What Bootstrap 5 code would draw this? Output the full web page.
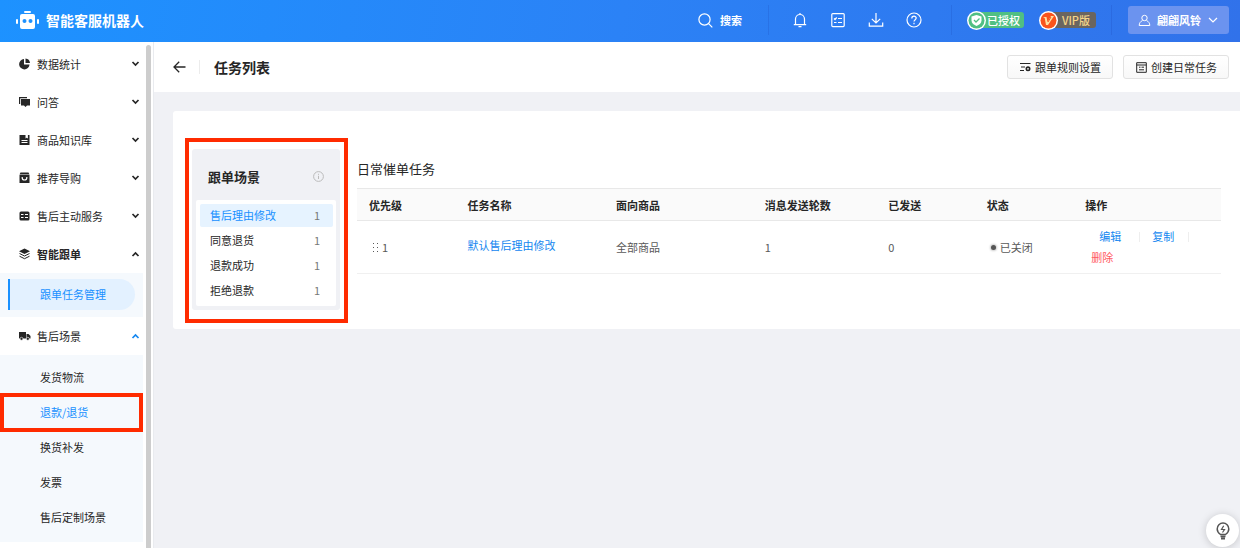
<!DOCTYPE html>
<html lang="zh-CN">
<head>
<meta charset="utf-8">
<meta name="viewport" content="width=device-width, initial-scale=1">
<title>智能客服机器人</title>
<link rel="stylesheet" href="https://cdn.jsdelivr.net/npm/bootstrap@5.3.0/dist/css/bootstrap.min.css">
<style>
  body { font-family: "Noto Sans CJK SC", "Noto Sans", sans-serif; font-size: 11px; line-height: 20px; color: #262626; background: #f0f1f5; }
  a { text-decoration: none; }
  svg { display: block; flex: none; fill: none; stroke: currentColor; }
  .solid { fill: currentColor; stroke: none; }

  /* top bar */
  .topbar { height: 42px; padding: 0 11px 2px 16px; color: #fff; background: linear-gradient(100deg, #1d92ff 0%, #2b82f6 50%, #3172ea 100%); }
  .topbar a, .topbar button { color: #fff; }
  .brand { font-size: 14px; font-weight: 700; gap: 7px; }
  .search { gap: 7px; padding-right: 26px; }
  .rule { width: 1px; height: 30px; background: rgba(20, 60, 170, .18); }
  .icon-set { gap: 22px; padding: 0 29px 0 23px; }
  .tags { gap: 15px; padding: 0 15px; }
  .tag { height: 16px; line-height: 16px; border-radius: 3px; padding: 0 4px 0 11px; margin-left: -10px; }
  .tag-ok { background: #50bf83; font-weight: 500; }
  .tag-vip { background: #6a6560; color: #f5d488; padding-left: 14px; padding-right: 6px; font-weight: 500; }
  .disc { z-index: 1; stroke: none; }
  .user-btn { height: 28px; padding: 0 11px 0 10px; gap: 6px; border: 0; border-radius: 3px; background: #6b93ef; font-size: 11px; font-weight: 700; }
  .user-btn svg:last-child { margin-left: 1px; }

  /* side menu */
  .side { width: 154px; background: #fff; border-right: 1px solid #e9ebef; padding-right: 2px; height: calc(100vh - 42px); overflow: hidden; }
  .menu { width: 143px; padding-top: 3px; }
  .group { height: 38px; width: 100%; border: 0; background: none; padding: 0 3px 0 18px; gap: 6px; font-size: 11px; color: #262626; text-align: left; }
  .sub { background: #f5f9fd; }
  .sub a { display: block; height: 35px; line-height: 35px; padding-left: 40px; color: #262626; }
  .sub a.on { color: #1890ff; }
  .sub-task { padding: 6px 8px 7px; }
  .sub-task a { height: 31px; line-height: 31px; padding-left: 30px; border-left: 2px solid #1890ff; border-radius: 0 16px 16px 0; background: #e3f1ff; }
  .sub-scene { padding: 5px 0 7px; }
  .marked { position: relative; }
  .marked::after { content: ""; position: absolute; inset: -2px 0; border: 4px solid #ff2b00; pointer-events: none; }
  .track { width: 5px; margin-top: 3px; border-radius: 3px 3px 0 0; background: #cdcdcd; }

  /* page head */
  .pagehead { height: 50px; background: #fff; padding: 0 11px 0 19px; }
  .pagehead h1 { font-size: 14px; line-height: 20px; font-weight: 700; }
  .pagehead .sep { width: 1px; height: 14px; background: #ececec; margin: 0 14px 0 13px; }
  .tools { gap: 10px; }
  .tool-btn { height: 24px; padding: 0 11px 0 12px; gap: 4px; border: 1px solid #e2e2e2; border-radius: 3px; background: linear-gradient(#fff, #f8f8f8); font-size: 11px; color: #262626; }

  /* content */
  .board { margin: 19px 0 0 19px; padding: 27px 19px 6px 12px; background: #fff; border-radius: 3px 0 0 3px; gap: 9px; }
  .scene-mark { width: 163px; flex: none; border: 4px solid #ff2b00; padding: 7px 4px 9px 3px; }
  .scene { background: #f0f1f5; border-radius: 3px; padding: 0 4px 4px; }
  .scene h2 { font-size: 13px; line-height: 20px; font-weight: 700; }
  .scene-head { height: 51px; padding: 4px 12px 0 12px; }
  .hint { color: #bbb; }
  .scene-list { background: #fff; border-radius: 2px; padding: 4px 3px 4px 4px; gap: 2px; }
  .scene-list a { height: 23px; line-height: 23px; padding: 0 13px 0 10px; color: #262626; border-radius: 2px; }
  .scene-list a span:last-child { color: #777; }
  .scene-list a.on { background: #e6f3ff; color: #1890ff; }
  .tasks h2 { font-size: 13px; line-height: 20px; font-weight: 400; margin: 21px 0 9px; }
  .task-table { table-layout: fixed; width: 100%; }
  .task-table th { height: 32px; padding: 0 12px; background: #fafafa; border-top: 1px solid #e8e8e8; border-bottom: 1px solid #e8e8e8; }
  .task-table td { height: 53px; padding: 0 12px; color: #595959; border-bottom: 1px solid #f0f0f0; }
  .link-blue { color: #1487f0; }
  .link-red { color: #ff5a5f; }
  .dot { width: 5px; height: 5px; border-radius: 50%; background: #555; box-shadow: 0 0 2px 1px #ccc; }
  .ops { line-height: 21px; padding-left: 6px; }
  .ops .sep { width: 1px; height: 10px; background: #eee; margin: 0 12px 0 18px; }
  .ops .sep:last-child { margin: 0 0 0 14px; }
  .tip-btn { position: fixed; right: 1px; bottom: 1px; width: 33px; height: 33px; border: 0; border-radius: 50%; background: #fff; color: #555; box-shadow: 0 1px 8px rgba(0, 0, 0, .18); }
</style>
</head>
<body>
<header class="topbar d-flex align-items-center">
  <a class="brand d-flex align-items-center" href="#">
    <svg class="solid" width="23" height="20" viewBox="0 0 23 20"><rect x="8" y="1" width="7" height="2" rx="1"/><path fill-rule="evenodd" d="M6 4h11a2 2 0 0 1 2 2v11a2 2 0 0 1-2 2H6a2 2 0 0 1-2-2V6a2 2 0 0 1 2-2zm2.500 5a2 2 0 1 0 0 4 2 2 0 0 0 0-4zm6 0a2 2 0 1 0 0 4 2 2 0 0 0 0-4z"/><rect x="0" y="9" width="2" height="5" rx="1"/><rect x="21" y="9" width="2" height="5" rx="1"/></svg>
    <span>智能客服机器人</span>
  </a>
  <div class="ms-auto d-flex align-items-center">
    <a class="search d-flex align-items-center fw-bold" href="#">
      <svg width="15" height="15" viewBox="0 0 15 15" stroke-width="1.200"><circle cx="6.500" cy="6.500" r="5.600"/><path d="M10.600 10.600 14.300 14.300"/></svg><span>搜索</span>
    </a>
    <span class="rule"></span>
    <div class="icon-set d-flex align-items-center">
      <a href="#" aria-label="通知"><svg width="16" height="16" viewBox="0 0 16 16" stroke-width="1.200"><path d="M3.500 12.500V7a4.500 4.500 0 0 1 9 0v5.500M1.800 12.600h12.400M8 2.500V1M6.500 14.600h3"/></svg></a>
      <a href="#" aria-label="清单"><svg width="16" height="16" viewBox="0 0 16 16" stroke-width="1.200"><rect x="1.800" y="1.600" width="12.400" height="13" rx="1"/><path d="m4 6.500 1 1 1.700-2M8 6.500h4M4 10.500h2.500M8 10.500h4"/></svg></a>
      <a href="#" aria-label="下载"><svg width="16" height="16" viewBox="0 0 16 16" stroke-width="1.200"><path d="M8 1v10M3.800 6.800 8 11l4.200-4.200M1.300 10.500v3.700h13.400v-3.700"/></svg></a>
      <a href="#" aria-label="帮助"><svg width="16" height="16" viewBox="0 0 16 16" stroke-width="1.200"><circle cx="8" cy="8" r="7"/><path d="M5.800 6.400c0-3 4.400-2.800 4.400-.3C10.200 7.700 8 7.700 8 9.600M8 10.800v1.400"/></svg></a>
    </div>
    <span class="rule"></span>
    <div class="tags d-flex">
      <span class="d-flex align-items-center">
        <svg class="disc" width="19" height="19" viewBox="0 0 19 19"><circle cx="9.500" cy="9.500" r="9.500" fill="#fff"/><circle cx="9.500" cy="9.500" r="8" fill="#50bf83"/><path d="m9.500 4 5 1.500v4c0 2.800-2.500 4.500-5 5.500-2.500-1-5-2.700-5-5.500v-4z" fill="#fff"/><path d="m7 9 2 2 3.500-3.500" stroke="#50bf83" stroke-width="1.300"/></svg>
        <span class="tag tag-ok">已授权</span>
      </span>
      <span class="d-flex align-items-center">
        <svg class="disc" width="19" height="19" viewBox="0 0 19 19"><circle cx="9.500" cy="9.500" r="9.500" fill="#fff"/><circle cx="9.500" cy="9.500" r="8" fill="#fa541c"/><path d="M4 6h3.500L8.500 11 12 5h3L9 14H7L5.700 7z" fill="#ffe0a0"/><path d="m9 11 3-5" stroke="#fa541c"/></svg>
        <span class="tag tag-vip">VIP版</span>
      </span>
    </div>
    <span class="rule me-3"></span>
    <button class="user-btn d-flex align-items-center" type="button">
      <svg width="13" height="13" viewBox="0 0 13 13"><circle cx="6.500" cy="4" r="2.700"/><path d="M4.500 6.500C2.500 7.500 1.200 9 1.200 11.500h10.600c0-2.500-1.300-4-3.300-5"/></svg>
      <span>翩翩风铃</span>
      <svg width="10" height="6" viewBox="0 0 10 6" stroke-width="1.200"><path d="m1 1 4 4 4-4"/></svg>
    </button>
  </div>
</header>

<div class="d-flex">
  <aside class="side d-flex flex-shrink-0 justify-content-between">
    <nav class="menu">
      <button class="group d-flex align-items-center" type="button"><svg class="solid" width="13" height="12" viewBox="0 0 13 12"><path d="M6 1v5.500h5.500A5.200 5.200 0 1 1 6 1z"/><path d="M7.500.5a5 5 0 0 1 4.500 4.500H7.500z"/></svg><span class="flex-grow-1">数据统计</span><svg width="9" height="6" viewBox="0 0 9 6" stroke-width="1.700"><path d="m1.500 1 3 3 3-3"/></svg></button>
      <button class="group d-flex align-items-center" type="button"><svg class="solid" width="13" height="12" viewBox="0 0 13 12"><path d="M1 1h8v1.200H2.200V8H1z"/><path d="M3 3h9v6.500H9L7.500 11 6 9.500H3z"/></svg><span class="flex-grow-1">问答</span><svg width="9" height="6" viewBox="0 0 9 6" stroke-width="1.700"><path d="m1.500 1 3 3 3-3"/></svg></button>
      <button class="group d-flex align-items-center" type="button"><svg class="solid" width="13" height="12" viewBox="0 0 13 12"><path fill-rule="evenodd" d="M1.500 1h6v3.500l1.200-.8 1.200.8V1h1.600v10h-10zM3.500 6v1h6V6zm0 2v1h6V8z"/></svg><span class="flex-grow-1">商品知识库</span><svg width="9" height="6" viewBox="0 0 9 6" stroke-width="1.700"><path d="m1.500 1 3 3 3-3"/></svg></button>
      <button class="group d-flex align-items-center" type="button"><svg class="solid" width="13" height="12" viewBox="0 0 13 12"><path d="M2.500.5h8l1 2h-10z"/><path d="M1.500 3h10v8h-10z"/><path d="M4.200 5v.7a2.300 2.300 0 0 0 4.600 0V5" fill="none" stroke="#fff" stroke-width="1.200"/></svg><span class="flex-grow-1">推荐导购</span><svg width="9" height="6" viewBox="0 0 9 6" stroke-width="1.700"><path d="m1.500 1 3 3 3-3"/></svg></button>
      <button class="group d-flex align-items-center" type="button"><svg class="solid" width="13" height="12" viewBox="0 0 13 12"><rect x="1.500" y="1.500" width="10" height="9" rx="1.500"/><path d="M3 4.500h2.500M3 7.500h2.500M7 4.500h3M7 7.500h3" stroke="#fff"/></svg><span class="flex-grow-1">售后主动服务</span><svg width="9" height="6" viewBox="0 0 9 6" stroke-width="1.700"><path d="m1.500 1 3 3 3-3"/></svg></button>
      <button class="group d-flex align-items-center fw-bold" type="button" aria-expanded="true"><svg width="13" height="12" viewBox="0 0 13 12"><path d="M6.500.5 12 3.200 6.500 6 1 3.200z" fill="currentColor" stroke="none"/><path d="m1.500 5.500 5 2.500 5-2.500M1.500 8.200l5 2.500 5-2.500"/></svg><span class="flex-grow-1">智能跟单</span><svg width="9" height="6" viewBox="0 0 9 6" stroke-width="1.700"><path d="m1.500 5 3-3 3 3"/></svg></button>
      <div class="sub sub-task"><a class="on" href="#">跟单任务管理</a></div>
      <button class="group d-flex align-items-center" type="button" aria-expanded="true"><svg class="solid" width="13" height="12" viewBox="0 0 13 12"><path d="M1 2h7v6.500H1zM8.500 4h2L12.500 6v2.500h-4z"/><circle cx="3.500" cy="8.800" r="1.500" stroke="#fff" stroke-width=".6"/><circle cx="9.800" cy="8.800" r="1.500" stroke="#fff" stroke-width=".6"/></svg><span class="flex-grow-1">售后场景</span><svg class="link-blue" width="9" height="6" viewBox="0 0 9 6" stroke-width="1.700"><path d="m1.500 5 3-3 3 3"/></svg></button>
      <div class="sub sub-scene">
        <a href="#">发货物流</a>
        <a class="on marked" href="#">退款/退货</a>
        <a href="#">换货补发</a>
        <a href="#">发票</a>
        <a href="#">售后定制场景</a>
      </div>
    </nav>
    <div class="track"></div>
  </aside>

  <main class="flex-grow-1">
    <div class="pagehead d-flex align-items-center">
      <a class="text-reset" href="#" aria-label="返回"><svg width="13" height="12" viewBox="0 0 13 12" stroke-width="1.300"><path d="M12.500 6H1M6.200.8 1 6l5.200 5.200"/></svg></a>
      <span class="sep"></span>
      <h1 class="mb-0 me-auto">任务列表</h1>
      <div class="tools d-flex">
        <button class="tool-btn d-flex align-items-center" type="button"><svg width="11" height="10" viewBox="0 0 11 10"><path d="M0 1.500h10.500M1 5h4M0 8.500h4"/><circle cx="8" cy="6.800" r="1.700" stroke-width="1.600"/></svg><span>跟单规则设置</span></button>
        <button class="tool-btn d-flex align-items-center" type="button"><svg width="11" height="11" viewBox="0 0 11 11"><path d="M.7.700h9.600v9.600H.7zM.7 3h9.600M3 5.200h1.500M5.500 5.200H8M3 7.800h5"/></svg><span>创建日常任务</span></button>
      </div>
    </div>

    <section class="board d-flex align-items-start">
      <div class="scene-mark">
        <div class="scene">
          <div class="scene-head d-flex align-items-center justify-content-between">
            <h2 class="mb-0">跟单场景</h2>
            <svg class="hint" width="11" height="11" viewBox="0 0 11 11"><circle cx="5.500" cy="5.500" r="4.900"/><path d="M5.500 4.800V8M5.500 2.800v1"/></svg>
          </div>
          <div class="scene-list d-flex flex-column">
            <a class="on d-flex justify-content-between" href="#"><span>售后理由修改</span><span>1</span></a>
            <a class="d-flex justify-content-between" href="#"><span>同意退货</span><span>1</span></a>
            <a class="d-flex justify-content-between" href="#"><span>退款成功</span><span>1</span></a>
            <a class="d-flex justify-content-between" href="#"><span>拒绝退款</span><span>1</span></a>
          </div>
        </div>
      </div>
      <div class="tasks flex-grow-1">
        <h2>日常催单任务</h2>
        <table class="task-table align-middle">
          <colgroup><col style="width:11.400%"><col style="width:17.200%"><col style="width:17.200%"><col style="width:14.300%"><col style="width:11.400%"><col style="width:11.400%"><col></colgroup>
          <thead><tr><th>优先级</th><th>任务名称</th><th>面向商品</th><th>消息发送轮数</th><th>已发送</th><th>状态</th><th>操作</th></tr></thead>
          <tbody>
            <tr>
              <td><span class="d-flex align-items-center gap-1 ps-1"><svg class="solid" width="5" height="9" viewBox="0 0 5 9"><path d="M0 0h1v1H0zM0 4h1v1H0zM0 8h1v1H0zM4 0h1v1H4zM4 4h1v1H4zM4 8h1v1H4z"/></svg>1</span></td>
              <td class="pb-1"><a class="link-blue" href="#">默认售后理由修改</a></td>
              <td>全部商品</td>
              <td>1</td>
              <td>0</td>
              <td><span class="d-flex align-items-center gap-1 ps-1"><span class="dot"></span>已关闭</span></td>
              <td>
                <div class="ops">
                  <div class="d-flex align-items-center ps-2"><a class="link-blue" href="#">编辑</a><span class="sep"></span><a class="link-blue" href="#">复制</a><span class="sep"></span></div>
                  <div><a class="link-red" href="#">删除</a></div>
                </div>
              </td>
            </tr>
          </tbody>
        </table>
      </div>
    </section>
  </main>
</div>

<button class="tip-btn d-flex align-items-center justify-content-center p-0" type="button" aria-label="提示">
  <svg width="14" height="18" viewBox="0 0 14 18" stroke-width="1.500"><path d="M4.500 12.500C2.500 11 1.200 9.500 1.200 6.900a5.800 5.800 0 0 1 11.600 0c0 2.600-1.300 4.100-3.300 5.600z"/><path d="M4.500 14.300h5M5 16.500h4" stroke-width="1.800"/><path d="M7.700 3.800 5.500 7.500h3L6.500 10.500" stroke-width="1.200"/></svg>
</button>
<script src="https://cdn.jsdelivr.net/npm/bootstrap@5.3.0/dist/js/bootstrap.bundle.min.js"></script>
</body>
</html>
